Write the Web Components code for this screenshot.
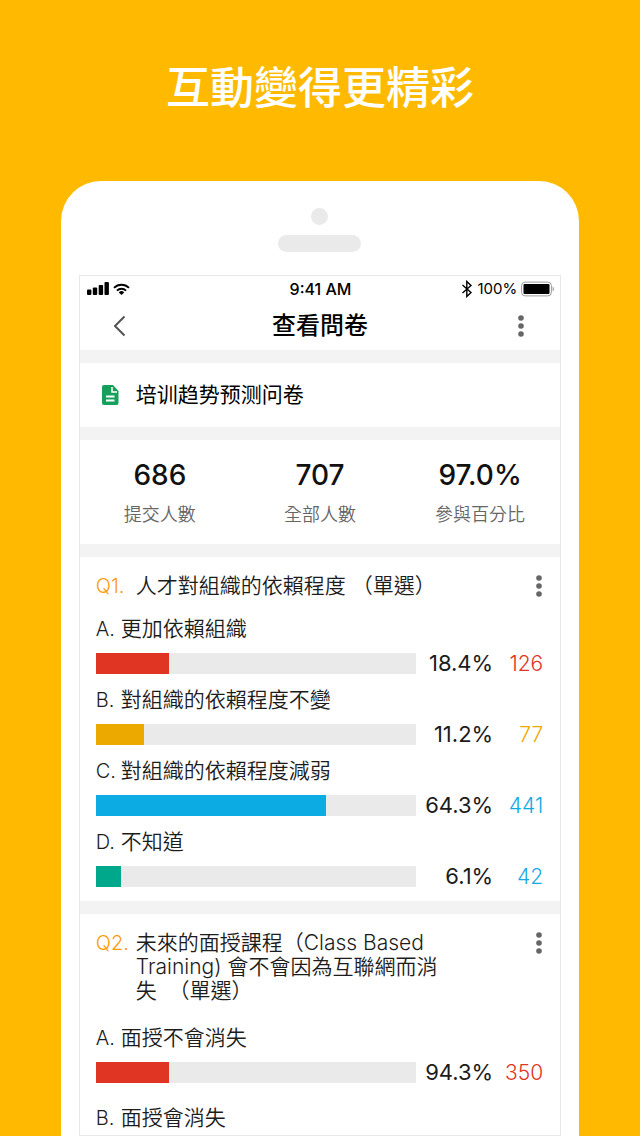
<!DOCTYPE html>
<html lang="zh-Hant">
<head>
  <meta charset="UTF-8" />
  <meta name="viewport" content="width=device-width, initial-scale=1" />
  <title>查看問卷</title>
  <style>
    * {
      box-sizing: border-box;
    }

    body {
      margin: 0;
      background: #ffba00;
      color: #1c1c1c;
      font-family: Inter, "Noto Sans CJK TC", sans-serif;
    }
  </style>
</head>
<body>
  <promo-page>
    <span slot="headline">互動變得更精彩</span>

    <phone-frame>
      <status-bar time="9:41 AM" battery="100%"></status-bar>
      <nav-bar>查看問卷</nav-bar>

      <survey-title lang="zh-Hans">培训趋势预测问卷</survey-title>

      <stat-row>
        <stat-item value="686">提交人數</stat-item>
        <stat-item value="707">全部人數</stat-item>
        <stat-item value="97.0%">參與百分比</stat-item>
      </stat-row>

      <survey-question number="Q1.">
        <span slot="text">人才對組織的依賴程度 （單選）</span>
        <survey-option letter="A." percent="18.4%" count="126" fill="23" color="#df3522">更加依賴組織</survey-option>
        <survey-option letter="B." percent="11.2%" count="77" fill="15" color="#ecaa00">對組織的依賴程度不變</survey-option>
        <survey-option letter="C." percent="64.3%" count="441" fill="72" color="#0cabe3">對組織的依賴程度減弱</survey-option>
        <survey-option letter="D." percent="6.1%" count="42" fill="8" color="#00a88b" count-color="#1ba9e5">不知道</survey-option>
      </survey-question>

      <survey-question number="Q2." class="loose">
        <span slot="text">未來的面授課程（Class Based Training) 會不會因為互聯網而消失&nbsp; （單選）</span>
        <survey-option letter="A." percent="94.3%" count="350" fill="23" color="#df3522">面授不會消失</survey-option>
        <survey-option letter="B.">面授會消失</survey-option>
      </survey-question>
    </phone-frame>
  </promo-page>

  <script>
    // Orange page with a headline above the phone
    class PromoPage extends HTMLElement {
      constructor() {
        super();
        this.attachShadow({ mode: "open" });
      }

      connectedCallback() {
        this.shadowRoot.innerHTML = `
          <style>
            :host {
              display: flex;
              flex-direction: column;
              align-items: center;
              min-height: 100vh;
            }

            h1 {
              margin: 0;
              padding: 56px 16px 61px;
              color: white;
              font-size: 44px;
              line-height: 64px;
              font-weight: 500;
              text-align: center;
            }
          </style>
          <h1><slot name="headline"></slot></h1>
          <slot></slot>
        `;
      }
    }

    // White phone body with camera, speaker and screen
    class PhoneFrame extends HTMLElement {
      constructor() {
        super();
        this.attachShadow({ mode: "open" });
      }

      connectedCallback() {
        this.shadowRoot.innerHTML = `
          <style>
            :host {
              box-sizing: border-box;
              display: flex;
              flex-direction: column;
              align-items: center;
              flex: 1;
              width: 81%;
              padding: 27px 18px 0;
              background: white;
              border-radius: 40px 40px 0 0;
            }

            .camera {
              width: 17px;
              height: 17px;
              border-radius: 50%;
              background: #eaeaea;
            }

            .speaker {
              width: 83px;
              height: 17px;
              margin: 10px 0 23px;
              border-radius: 9px;
              background: #eaeaea;
            }

            /* Grey gaps between the sections are the screen background */
            .screen {
              box-sizing: border-box;
              display: flex;
              flex-direction: column;
              flex: 1;
              width: 100%;
              border: 1px solid #e8e8e8;
              background: #f3f3f3;
            }
          </style>
          <div class="camera"></div>
          <div class="speaker"></div>
          <main class="screen"><slot></slot></main>
        `;
      }
    }

    class StatusBar extends HTMLElement {
      constructor() {
        super();
        this.attachShadow({ mode: "open" });
      }

      connectedCallback() {
        this.shadowRoot.innerHTML = `
          <style>
            :host {
              display: grid;
              grid-template-columns: 1fr auto 1fr;
              align-items: center;
              padding: 3px 6px 1px 7px;
              background: white;
              color: black;
              font-size: 15px;
              line-height: 20px;
            }

            .left,
            .right {
              display: flex;
              align-items: center;
              gap: 4px;
            }

            .right {
              justify-content: flex-end;
            }

            .time {
              font-size: 16px;
              font-weight: 500;
            }

            svg {
              display: block;
            }
          </style>
          <div class="left">
            <!-- Signal -->
            <svg width="22" height="14" viewBox="0 0 22 14">
              <rect x="0" y="7.5" width="4.4" height="5.5" rx="1" />
              <rect x="5.8" y="5.5" width="4.4" height="7.5" rx="1" />
              <rect x="11.7" y="3" width="4.4" height="10" rx="1" />
              <rect x="17.5" y="0" width="4.4" height="13" rx="1" />
            </svg>
            <!-- Wifi -->
            <svg width="17" height="13" viewBox="0 0 17 13" fill="none" stroke="black" stroke-width="1.9">
              <path d="M1 4.8a10.6 10.6 0 0 1 15 0" />
              <path d="M3.9 7.6a6.6 6.6 0 0 1 9.2 0" />
              <path d="M8.5 12L5.8 9.4a3.9 3.9 0 0 1 5.4 0z" fill="black" stroke="none" />
            </svg>
          </div>
          <span class="time">${this.getAttribute("time")}</span>
          <div class="right">
            <!-- Bluetooth -->
            <svg width="12" height="18" viewBox="0 0 12 18" fill="none" stroke="black" stroke-width="1.4">
              <path d="M1.5 5l8.5 7.5-4.2 4v-15l4.2 4L1.5 13" />
            </svg>
            <span>${this.getAttribute("battery")}</span>
            <!-- Battery -->
            <svg width="33" height="16" viewBox="0 0 33 16">
              <rect x="0.6" y="1.1" width="29.8" height="13.8" rx="3.5" fill="none" stroke="#9b9b9b" />
              <rect x="2.5" y="3" width="26" height="10" rx="1" />
              <path d="M31.6 5.5c1.8 1 1.8 4 0 5z" fill="#9b9b9b" />
            </svg>
          </div>
        `;
      }
    }

    // Three vertical dots
    class MoreButton extends HTMLElement {
      constructor() {
        super();
        this.attachShadow({ mode: "open" });
      }

      connectedCallback() {
        this.shadowRoot.innerHTML = `
          <style>
            :host {
              display: block;
            }

            button {
              display: block;
              padding: 1px 2px;
              border: 0;
              background: none;
              cursor: pointer;
            }

            svg {
              display: block;
            }
          </style>
          <button type="button" aria-label="更多">
            <svg width="6" height="22" viewBox="0 0 6 22" fill="#666">
              <circle cx="3" cy="3" r="2.8" />
              <circle cx="3" cy="11" r="2.8" />
              <circle cx="3" cy="19" r="2.8" />
            </svg>
          </button>
        `;
      }
    }

    class NavBar extends HTMLElement {
      constructor() {
        super();
        this.attachShadow({ mode: "open" });
      }

      connectedCallback() {
        this.shadowRoot.innerHTML = `
          <style>
            :host {
              display: grid;
              grid-template-columns: 1fr auto 1fr;
              align-items: center;
              padding: 10px 34px 8px;
              background: white;
            }

            h2 {
              margin: 0;
              color: black;
              font-size: 24px;
              line-height: 32px;
              font-weight: 500;
            }

            .back {
              justify-self: start;
              padding: 2px 0;
              border: 0;
              background: none;
              cursor: pointer;
            }

            .back svg {
              display: block;
            }

            more-button {
              justify-self: end;
            }
          </style>
          <button class="back" type="button" aria-label="返回">
            <svg width="12" height="22" viewBox="0 0 12 22" fill="none" stroke="#555" stroke-width="2">
              <path d="M10.5 1.5L1 11l9.5 9.5" />
            </svg>
          </button>
          <h2><slot></slot></h2>
          <more-button></more-button>
        `;
      }
    }

    // Name of the survey with a document icon
    class SurveyTitle extends HTMLElement {
      constructor() {
        super();
        this.attachShadow({ mode: "open" });
      }

      connectedCallback() {
        this.shadowRoot.innerHTML = `
          <style>
            :host {
              display: flex;
              align-items: center;
              gap: 17px;
              margin-top: 13px;
              padding: 18px 22px;
              background: white;
              color: black;
              font-family: Inter, "Noto Sans CJK SC", sans-serif;
              font-size: 21px;
              line-height: 28px;
            }
          </style>
          <svg width="17" height="20" viewBox="0 0 17 20">
            <path d="M2 0h9l5.5 6v12a2 2 0 0 1-2 2H2a2 2 0 0 1-2-2V2a2 2 0 0 1 2-2z" fill="#15a05c" />
            <path d="M10 2v5h5" fill="none" stroke="white" stroke-width="1.5" />
            <path d="M4 11.5h8.5M4 15.5h8.5" stroke="white" stroke-width="1.8" />
          </svg>
          <slot></slot>
        `;
      }
    }

    class StatRow extends HTMLElement {
      constructor() {
        super();
        this.attachShadow({ mode: "open" });
      }

      connectedCallback() {
        this.shadowRoot.innerHTML = `
          <style>
            :host {
              display: grid;
              grid-template-columns: repeat(3, 1fr);
              margin-top: 13px;
              padding: 18px 0 16px;
              background: white;
            }
          </style>
          <slot></slot>
        `;
      }
    }

    class StatItem extends HTMLElement {
      constructor() {
        super();
        this.attachShadow({ mode: "open" });
      }

      connectedCallback() {
        this.shadowRoot.innerHTML = `
          <style>
            :host {
              display: flex;
              flex-direction: column;
              align-items: center;
              gap: 10px;
            }

            strong {
              color: #111;
              font-size: 28px;
              line-height: 34px;
              font-weight: 500;
            }

            .label {
              color: #666;
              font-size: 18px;
              line-height: 26px;
              font-weight: 350;
            }
          </style>
          <strong>${this.getAttribute("value")}</strong>
          <span class="label"><slot></slot></span>
        `;
      }
    }

    // Question heading followed by its options
    class SurveyQuestion extends HTMLElement {
      constructor() {
        super();
        this.attachShadow({ mode: "open" });
      }

      connectedCallback() {
        this.shadowRoot.innerHTML = `
          <style>
            :host {
              --gap: 12px;
              display: block;
              margin-top: 13px;
              padding: 17px 16px 14px;
              background: white;
              font-size: 21px;
              font-weight: 350;
            }

            :host(.loose) {
              --gap: 21px;
              flex: 1;
              padding-bottom: 2px;
            }

            header {
              display: flex;
              align-items: flex-start;
              margin-bottom: 17px;
              line-height: 24px;
            }

            :host(.loose) header {
              margin-bottom: 21px;
            }

            .number {
              flex: none;
              width: 40px;
              color: #ff9a0a;
              font-size: 20px;
            }

            h3 {
              flex: 1;
              margin: 0;
              padding-right: 80px;
              font-size: 21px;
              font-weight: 350;
            }

            .options {
              display: flex;
              flex-direction: column;
              gap: var(--gap);
            }
          </style>
          <header>
            <span class="number">${this.getAttribute("number")}</span>
            <h3><slot name="text"></slot></h3>
            <more-button></more-button>
          </header>
          <div class="options"><slot></slot></div>
        `;
      }
    }

    // One answer, with a result bar when it has a percentage
    class SurveyOption extends HTMLElement {
      constructor() {
        super();
        this.attachShadow({ mode: "open" });
      }

      renderResult() {
        const percent = this.getAttribute("percent");
        if (!percent) return "";

        return `
          <div class="result">
            <div class="track"><div class="fill"></div></div>
            <span class="percent">${percent}</span>
            <span class="count">${this.getAttribute("count")}</span>
          </div>
        `;
      }

      connectedCallback() {
        const color = this.getAttribute("color") || "#df3522";
        const countColor = this.getAttribute("count-color") || color;

        this.shadowRoot.innerHTML = `
          <style>
            :host {
              display: block;
            }

            .label {
              display: flex;
              line-height: 28px;
            }

            .letter {
              width: 25px;
              font-size: 20px;
            }

            .result {
              display: grid;
              grid-template-columns: 1fr 77px 50px;
              align-items: center;
              margin: 10px 1px 0 0;
              line-height: 21px;
              text-align: right;
            }

            .track {
              height: 21px;
              background: #eaeaea;
            }

            .fill {
              width: ${this.getAttribute("fill")}%;
              height: 100%;
              background: ${color};
            }

            .percent {
              font-size: 22px;
              font-weight: 400;
            }

            .count {
              color: ${countColor};
              font-size: 21px;
              font-weight: 300;
            }
          </style>
          <div class="label">
            <span class="letter">${this.getAttribute("letter")}</span>
            <slot></slot>
          </div>
          ${this.renderResult()}
        `;
      }
    }

    // Register the custom elements with the browser
    customElements.define("promo-page", PromoPage);
    customElements.define("phone-frame", PhoneFrame);
    customElements.define("status-bar", StatusBar);
    customElements.define("more-button", MoreButton);
    customElements.define("nav-bar", NavBar);
    customElements.define("survey-title", SurveyTitle);
    customElements.define("stat-row", StatRow);
    customElements.define("stat-item", StatItem);
    customElements.define("survey-question", SurveyQuestion);
    customElements.define("survey-option", SurveyOption);
  </script>
</body>
</html>
